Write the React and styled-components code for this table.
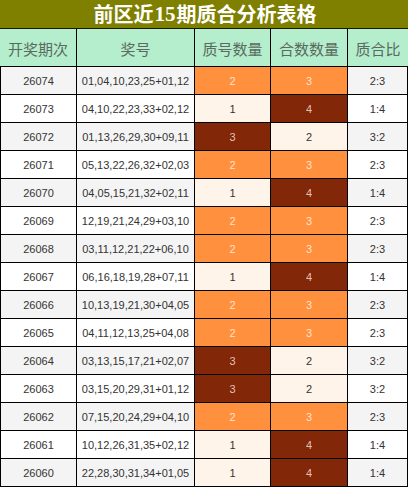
import React from "react";
import styled, { createGlobalStyle, css } from "styled-components";

const GlobalStyle = createGlobalStyle`
  html, body {
    margin: 0;
    padding: 0;
    background: #fff;
  }
`;

const rows = [
  ["26074", "01,04,10,23,25+01,12", 2, 3],
  ["26073", "04,10,22,23,33+02,12", 1, 4],
  ["26072", "01,13,26,29,30+09,11", 3, 2],
  ["26071", "05,13,22,26,32+02,03", 2, 3],
  ["26070", "04,05,15,21,32+02,11", 1, 4],
  ["26069", "12,19,21,24,29+03,10", 2, 3],
  ["26068", "03,11,12,21,22+06,10", 2, 3],
  ["26067", "06,16,18,19,28+07,11", 1, 4],
  ["26066", "10,13,19,21,30+04,05", 2, 3],
  ["26065", "04,11,12,13,25+04,08", 2, 3],
  ["26064", "03,13,15,17,21+02,07", 3, 2],
  ["26063", "03,15,20,29,31+01,12", 3, 2],
  ["26062", "07,15,20,24,29+04,10", 2, 3],
  ["26061", "10,12,26,31,35+02,12", 1, 4],
  ["26060", "22,28,30,31,34+01,05", 1, 4],
];

const columns = ["开奖期次", "奖号", "质号数量", "合数数量", "质合比"];

const levels = {
  0: css`
    background: #fff4ea;
    color: #333;
  `,
  1: css`
    background: #ff903e;
    color: rgba(255, 238, 222, 0.9);
  `,
  2: css`
    background: #822708;
    color: rgba(240, 214, 200, 0.9);
  `,
};

const Wrap = styled.div`
  width: 408px;
  height: 487px;
  overflow: hidden;
  font-family: "Liberation Sans", "Noto Sans CJK SC", sans-serif;
`;

const Title = styled.div`
  height: 29px;
  box-sizing: border-box;
  background: #7f7f00;
  border-bottom: 1px solid #1a1a00;
  color: #fff;
  font-family: "Noto Sans CJK SC", sans-serif;
  font-weight: 700;
  font-size: 20px;
  display: flex;
  align-items: center;
  justify-content: center;
  padding-left: 2px;
  line-height: 1;
`;

const Num = styled.span`
  font-family: "Liberation Serif", "DejaVu Serif", serif;
  font-weight: 700;
  font-size: 21px;
  margin: 0 1px;
`;

const Grid = styled.div`
  display: grid;
  grid-template-columns: 77px 118px 76px 77px 60px;
`;

const HeadCell = styled.div`
  height: 38px;
  box-sizing: border-box;
  background: #b4eecd;
  border-bottom: 1px solid #000;
  border-right: ${(p) => (p.$last ? "none" : "1px solid #000")};
  color: #5a6a60;
  font-family: "Noto Sans CJK SC", sans-serif;
  font-size: 15px;
  display: flex;
  align-items: center;
  justify-content: center;
  padding-top: 1px;
`;

const Cell = styled.div`
  height: 28px;
  box-sizing: border-box;
  border-bottom: 1px solid #000;
  border-right: 1px solid #000;
  border-left: ${(p) => (p.$first ? "1px solid #000" : "none")};
  background: ${(p) => (p.$odd ? "#fff" : "#f4f4f4")};
  color: #333;
  font-size: 11px;
  display: flex;
  align-items: center;
  justify-content: center;
  ${(p) => p.$level !== undefined && levels[p.$level]}
`;

export default function App() {
  return (
    <Wrap>
      <GlobalStyle />
      <Title>
        前区近<Num>15</Num>期质合分析表格
      </Title>
      <Grid>
        {columns.map((c, i) => (
          <HeadCell key={c} $last={i === columns.length - 1}>
            {c}
          </HeadCell>
        ))}
        {rows.map(([issue, nums, prime, comp], i) => {
          const odd = i % 2 === 1;
          return (
            <React.Fragment key={issue}>
              <Cell $odd={odd} $first>
                {issue}
              </Cell>
              <Cell $odd={odd}>{nums}</Cell>
              <Cell $odd={odd} $level={prime - 1}>
                {prime}
              </Cell>
              <Cell $odd={odd} $level={comp - 2}>
                {comp}
              </Cell>
              <Cell $odd={odd}>
                {prime}:{comp}
              </Cell>
            </React.Fragment>
          );
        })}
      </Grid>
    </Wrap>
  );
}
